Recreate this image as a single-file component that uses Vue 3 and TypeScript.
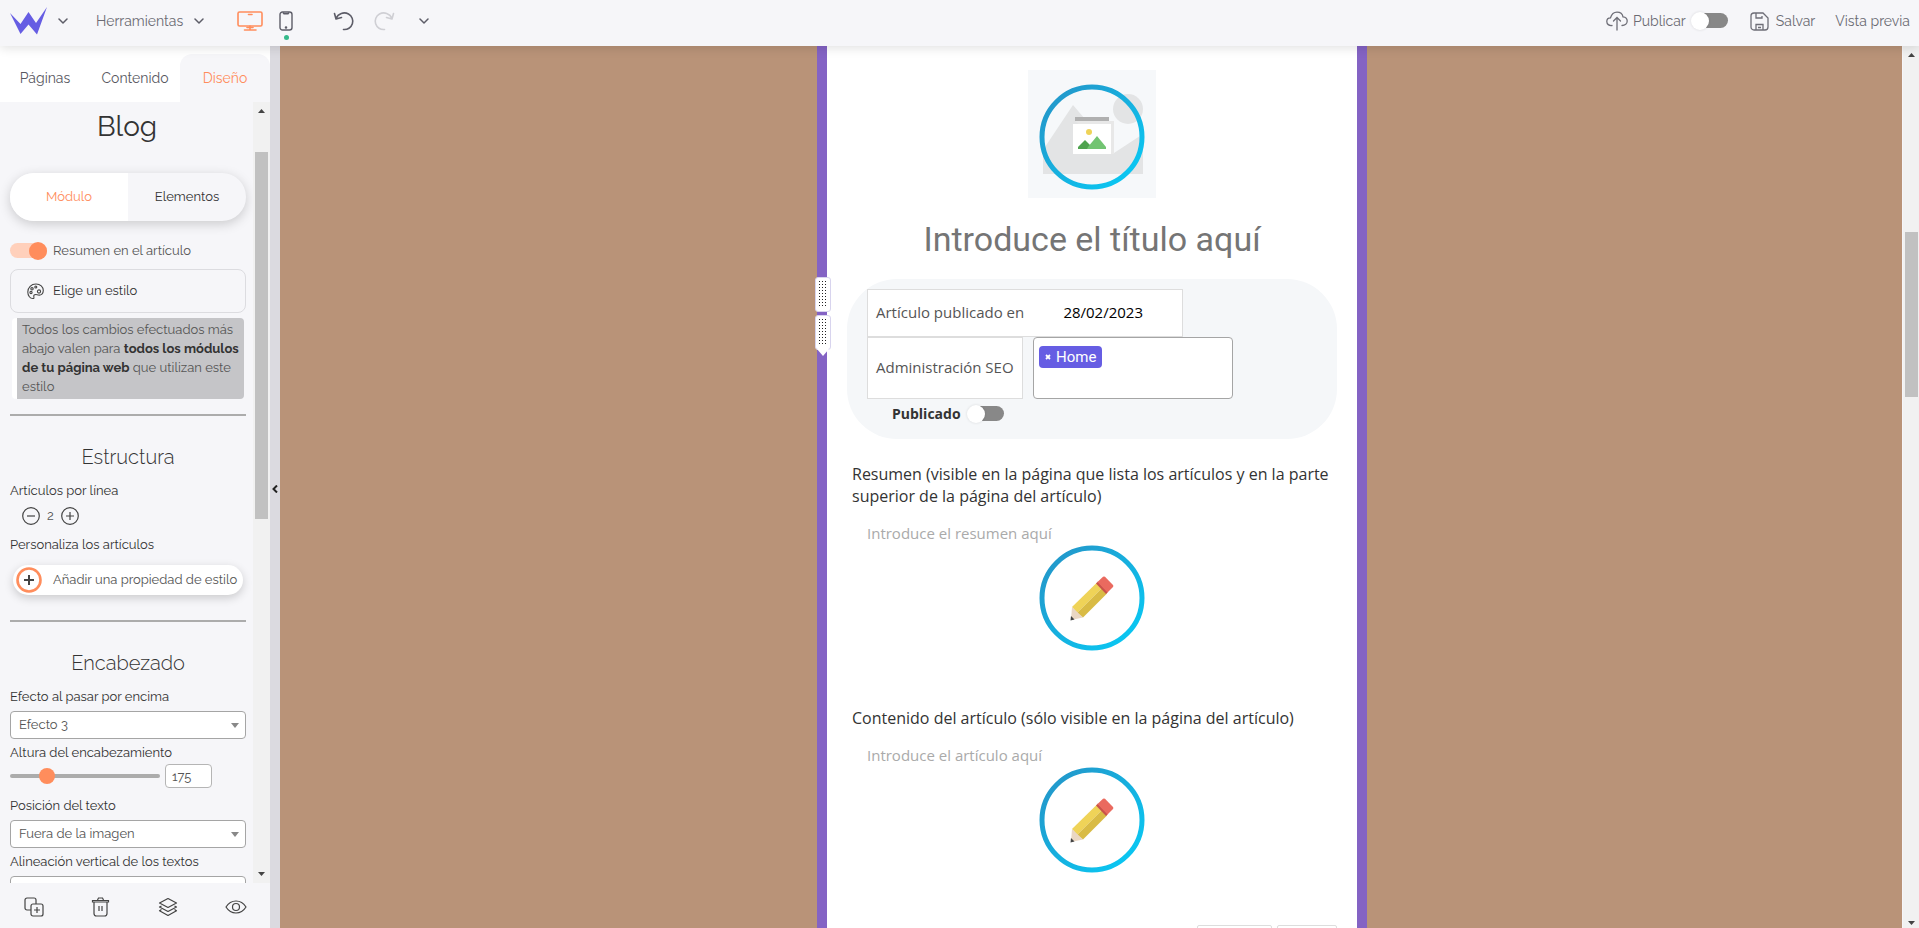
<script setup lang="ts">
import { ref } from 'vue'

const sideTabs = ['Páginas', 'Contenido', 'Diseño']
const activeTab = ref('Diseño')
const mode = ref<'modulo' | 'elementos'>('modulo')
const summary = ref(true)
const published = ref(false)
const publish = ref(false)
const perLine = ref(2)
const headerHeight = ref(175)
const effect = ref('Efecto 3')
const textPosition = ref('Fuera de la imagen')
const vertical = ref('')
const date = ref('28/02/2023')
const title = ref('')
const sections = ref([
  { id: 'resumen', label: 'Resumen (visible en la página que lista los artículos y en la parte superior de la página del artículo)', hint: 'Introduce el resumen aquí', text: '' },
  { id: 'articulo', label: 'Contenido del artículo (sólo visible en la página del artículo)', hint: 'Introduce el artículo aquí', text: '' }
])
</script>

<template>
  <div class="app">
    <svg class="defs" width="0" height="0" aria-hidden="true">
      <defs>
        <linearGradient id="ring" x1="0" y1="0" x2="1" y2="1">
          <stop offset="0.15" stop-color="#219bcd" />
          <stop offset="0.85" stop-color="#0bc4f0" />
        </linearGradient>
      </defs>
    </svg>

    <header class="topbar">
      <button class="logo" aria-label="Inicio">
        <svg width="38" height="28" viewBox="0 0 38 28"><path fill="#665de3" d="M1 6 11.500 17 19.500 5 27 16 38 0 28 27.500 19.500 17.500 11.500 27Z" /></svg>
        <svg class="chev" width="10" height="6" viewBox="0 0 10 6"><path d="M1 1 5 5 9 1" /></svg>
      </button>
      <button class="tools">
        <span>Herramientas</span>
        <svg class="chev" width="10" height="6" viewBox="0 0 10 6"><path d="M1 1 5 5 9 1" /></svg>
      </button>
      <div class="devices">
        <button aria-label="Escritorio">
          <svg width="26" height="20" viewBox="0 0 26 20" fill="none" stroke="#ff8d5c" stroke-width="1.600" stroke-linecap="round"><rect x="1" y="1" width="24" height="14" rx="1.500" /><path d="M11.500 3.500h3.500M13 15v3.500M10 16.500h6M7.500 19h11.500" /></svg>
        </button>
        <button class="mobile" aria-label="Móvil">
          <svg width="14" height="20" viewBox="0 0 14 20" fill="none" stroke="#5d5d68" stroke-width="1.400"><rect x="1" y="1" width="12" height="18" rx="2.500" /><path d="M4 1.500 5 2.800h4L10 1.500" /><circle cx="7" cy="16.500" r=".6" /></svg>
          <i></i>
        </button>
      </div>
      <div class="history">
        <button aria-label="Deshacer">
          <svg width="22" height="20" viewBox="0 0 22 20" fill="none" stroke="#5d5d68" stroke-width="1.600" stroke-linecap="round" stroke-linejoin="round"><path d="M3 7.500C5 2.500 11 .5 15.500 3a8.300 8.300 0 0 1-5 15.500M1.500 2.500 3 8l5.500-1.500" /></svg>
        </button>
        <button aria-label="Rehacer">
          <svg width="22" height="20" viewBox="0 0 22 20" fill="none" stroke="#cfcfd4" stroke-width="1.600" stroke-linecap="round" stroke-linejoin="round"><path d="M19 7.500C17 2.500 11 .5 6.500 3a8.300 8.300 0 0 0 5 15.500M20.500 2.500 19 8l-5.500-1.500" /></svg>
        </button>
        <button class="more" aria-label="Más">
          <svg class="chev" width="10" height="6" viewBox="0 0 10 6"><path d="M1 1 5 5 9 1" /></svg>
        </button>
      </div>
      <div class="actions">
        <label class="publish">
          <svg width="22" height="20" viewBox="0 0 22 20" fill="none" stroke="#6e6e77" stroke-width="1.300" stroke-linecap="round"><path d="M6 14.500C3 15 .8 13 .8 10.500.8 8.300 2.500 6.800 4.500 6.800 5.500 3.500 8 1.200 11 1.200s5.500 1.800 6 4.600c2.500.2 4.200 2 4.200 4.300 0 2.500-2.200 4.400-5.200 4.400M11 19V7M7.500 10 11 6.500l3.500 3.500" /></svg>
          <span>Publicar</span>
          <input v-model="publish" class="switch" type="checkbox" />
        </label>
        <button class="save">
          <svg width="19" height="19" viewBox="0 0 19 19" fill="none" stroke="#6e6e77" stroke-width="1.300"><path d="M4 1h9l5 5v9a3 3 0 0 1-3 3H4a3 3 0 0 1-3-3V4a3 3 0 0 1 3-3ZM6 1v5h6V4M6 18v-5.500h7V18M8 15.500h3" /></svg>
          <span>Salvar</span>
        </button>
        <button>Vista previa</button>
      </div>
    </header>

    <div class="body">
      <aside class="sidebar">
        <nav class="tabs">
          <button v-for="t in sideTabs" :key="t" :class="{ on: t === activeTab }" @click="activeTab = t">{{ t }}</button>
        </nav>
        <div class="panel">
          <div class="settings">
            <h1>Blog</h1>
            <div class="pill">
              <button :class="{ on: mode === 'modulo' }" @click="mode = 'modulo'">Módulo</button>
              <button :class="{ on: mode === 'elementos' }" @click="mode = 'elementos'">Elementos</button>
            </div>
            <label class="check"><input v-model="summary" class="switch warm" type="checkbox" /><span>Resumen en el artículo</span></label>
            <button class="style-pick">
              <svg width="17" height="17" viewBox="0 0 17 17" fill="none" stroke="#444" stroke-width="1.100"><path d="M6.500 15.500C3 16 .8 12.500.8 9 .8 4.500 4.200 1 9 1c4.300 0 7.300 2.800 7.300 6.500 0 3-2 5-5 4.500-2-.4-3.300-1-4.300.2-.9 1.100.8 2.900-.5 3.300Z" /><circle cx="4" cy="9.500" r="1.100" /><circle cx="5" cy="5.800" r="1.200" /><circle cx="8.800" cy="4" r="1" /><circle cx="12" cy="8.500" r="1.600" /></svg>
              <span>Elige un estilo</span>
            </button>
            <p class="note">Todos los cambios efectuados más abajo valen para <b>todos los módulos de tu página web</b> que utilizan este estilo</p>
            <hr />
            <h2>Estructura</h2>
            <p class="name">Artículos por línea</p>
            <div class="stepper">
              <button aria-label="Menos" @click="perLine--"><svg width="18" height="18" viewBox="0 0 18 18"><circle cx="9" cy="9" r="8.300" /><path d="M5 9h8" /></svg></button>
              <output>{{ perLine }}</output>
              <button aria-label="Más" @click="perLine++"><svg width="18" height="18" viewBox="0 0 18 18"><circle cx="9" cy="9" r="8.300" /><path d="M5 9h8M9 5v8" /></svg></button>
            </div>
            <p class="name">Personaliza los artículos</p>
            <button class="add">
              <svg width="26" height="26" viewBox="0 0 26 26" fill="none"><circle cx="13" cy="13" r="11.500" stroke="#ff8d5c" stroke-width="2.600" /><path d="M8 13h10M13 8v10" stroke="#444" stroke-width="2" /></svg>
              <span>Añadir una propiedad de estilo</span>
            </button>
            <hr class="second" />
            <h2>Encabezado</h2>
            <label class="name" for="effect">Efecto al pasar por encima</label>
            <div class="select">
              <select id="effect" v-model="effect"><option>Efecto 3</option></select>
              <svg width="8" height="5" viewBox="0 0 8 5"><path d="M0 0h8L4 5Z" fill="#888" /></svg>
            </div>
            <label class="name" for="height">Altura del encabezamiento</label>
            <div class="slider">
              <input id="height" v-model.number="headerHeight" type="range" min="0" max="800" />
              <input v-model.number="headerHeight" class="num" type="text" aria-label="Altura" />
            </div>
            <label class="name" for="position">Posición del texto</label>
            <div class="select">
              <select id="position" v-model="textPosition"><option>Fuera de la imagen</option></select>
              <svg width="8" height="5" viewBox="0 0 8 5"><path d="M0 0h8L4 5Z" fill="#888" /></svg>
            </div>
            <label class="name" for="vertical">Alineación vertical de los textos</label>
            <div class="select">
              <select id="vertical" v-model="vertical"><option value=""></option></select>
            </div>
          </div>
          <div class="scroll side">
            <svg width="7" height="4" viewBox="0 0 7 4"><path d="M3.500 0 7 4H0Z" /></svg>
            <div class="rail"><div class="thumb"></div></div>
            <svg width="7" height="4" viewBox="0 0 7 4"><path d="M0 0h7L3.500 4Z" /></svg>
          </div>
        </div>
        <footer class="bottom">
          <button aria-label="Duplicar"><svg width="20" height="20" viewBox="0 0 20 20"><path d="M7 13H3a2 2 0 0 1-2-2V3a2 2 0 0 1 2-2h7a2 2 0 0 1 2 2v4" /><rect x="7" y="7" width="12" height="12" rx="2" /><path d="M10 13h6M13 10v6" /></svg></button>
          <button aria-label="Eliminar"><svg width="20" height="20" viewBox="0 0 20 20"><path d="M3 5v11.500A2.500 2.500 0 0 0 5.500 19h8a2.500 2.500 0 0 0 2.500-2.500V5M1.500 3.500h16V5h-16ZM6.500 3l1-2h4l1 2M8 9v5M11 9v5" /></svg></button>
          <button aria-label="Capas"><svg width="20" height="20" viewBox="0 0 20 20" stroke-linejoin="round"><path d="M10 1.500 18.500 6 10 10.500 1.500 6ZM3.500 9 1.500 10l8.500 4.500L18.500 10l-2-1M3.500 12.500l-2 1.200L10 18.500l8.500-4.800-2-1.200" /></svg></button>
          <button aria-label="Ver"><svg width="22" height="14" viewBox="0 0 22 14"><path d="M1 7C3.500 3 7 1 11 1s7.500 2 10 6c-2.500 4-6 6-10 6S3.500 11 1 7Z" /><circle cx="11" cy="7" r="3.500" /></svg></button>
        </footer>
      </aside>

      <button class="divider" aria-label="Plegar panel">
        <svg width="6" height="8" viewBox="0 0 6 8" fill="none" stroke="#222" stroke-width="2"><path d="M5 .5 1.500 4 5 7.500" /></svg>
      </button>

      <main class="canvas">
        <article class="post">
          <div class="grips">
            <span class="grip"></span>
            <span class="grip low"></span>
          </div>
          <button class="picture" aria-label="Cambiar imagen">
            <svg width="128" height="128" viewBox="0 0 128 128">
              <rect width="128" height="128" fill="#f6f8fa" />
              <circle cx="100" cy="39" r="15" fill="#e3e4e5" />
              <path fill="#e3e4e5" d="M15 104V80L45 35 86 83 115 64v40Z" />
              <path fill="#b0b0b0" d="M47 47h34v4H47z" />
              <path fill="#e8e8e8" d="M47 51h39v33h-3z" />
              <path fill="#fff" d="M45 54h38v30H45z" />
              <circle cx="61" cy="62" r="3" fill="#efd358" />
              <path fill="#4fa34f" d="M50 79v-2l7-7 6 6v3z" />
              <path fill="#72c472" d="M59 79l1-2 9-11 9 11v2z" />
              <circle cx="64" cy="67" r="50" fill="none" stroke="url(#ring)" stroke-width="5" />
            </svg>
          </button>
          <input v-model="title" class="title" type="text" placeholder="Introduce el título aquí" aria-label="Título" />
          <div class="meta">
            <div class="row">
              <label class="dated"><span>Artículo publicado en</span><input v-model="date" type="text" /></label>
            </div>
            <div class="row seo">
              <span class="cell">Administración SEO</span>
              <div class="tags"><span class="tag"><button aria-label="Quitar Home"><svg width="6" height="6" viewBox="0 0 6 6"><path d="M1 1 5 5M5 1 1 5" stroke="#fff" stroke-width="1.800" /></svg></button>Home</span></div>
            </div>
            <label class="state"><b>Publicado</b><input v-model="published" class="switch" type="checkbox" /></label>
          </div>
          <section v-for="s in sections" :key="s.id" class="block">
            <label :for="s.id">{{ s.label }}</label>
            <textarea :id="s.id" v-model="s.text" rows="1" :placeholder="s.hint"></textarea>
            <button class="edit" aria-label="Editar">
              <svg width="106" height="106" viewBox="0 0 106 106">
                <circle cx="53" cy="53" r="50" fill="#fff" stroke="url(#ring)" stroke-width="5" />
                <path fill="#efd358" d="M33 62 58 37.500 63 43 38 68Z" />
                <path fill="#d9bb45" d="M38 68 63 43 68 48.500 44 72.500Z" />
                <path fill="#ead7c3" d="M33 62 44 72.500 32 75Z" />
                <path fill="#444" d="M32 71 35.500 74.500 31.500 75.500Z" />
                <path fill="#c9524b" d="M57 38.500 59 36.500 69 47 67 49Z" />
                <path fill="#ea6a5f" d="M58.500 37 64 31.800q1-.8 2 0l8 8.200q.8 1 0 2L68.500 47.500Z" />
              </svg>
            </button>
          </section>
          <div class="ends"><button aria-label="Cancelar"></button><button aria-label="Aceptar"></button></div>
        </article>
      </main>
      <div class="scroll page">
        <svg width="7" height="4" viewBox="0 0 7 4"><path d="M3.500 0 7 4H0Z" /></svg>
        <div class="rail"><div class="thumb"></div></div>
        <svg width="7" height="4" viewBox="0 0 7 4"><path d="M0 0h7L3.500 4Z" /></svg>
      </div>
    </div>
  </div>
</template>

<style>
body { margin: 0; overflow: hidden; }
</style>

<style scoped>
* { box-sizing: border-box; }
.app { height: 100vh; display: flex; flex-direction: column; overflow: hidden; background: #f6f6f9; font: 13px/20px Raleway, Lato, sans-serif; color: #333; }
.defs { position: absolute; }
button { padding: 0; border: 0; background: none; font: inherit; color: inherit; cursor: pointer; }
input, textarea, select { font: inherit; margin: 0; outline: none; }
svg { display: block; flex: none; }
h1, h2, p { margin: 0; }

.topbar { position: relative; z-index: 2; flex: none; height: 46px; display: flex; align-items: center; padding: 0 9px; background: #f6f6f9; box-shadow: 0 2px 10px rgba(0, 0, 0, .12); font-size: 14px; font-weight: 400; color: #6b6b73; padding-bottom: 4px; }
.chev { fill: none; stroke: #5d5d68; stroke-width: 1.500px; stroke-linecap: round; stroke-linejoin: round; }
.logo, .tools { display: flex; align-items: center; gap: 11px; }
.tools { margin-left: 28px; }
.devices { display: flex; align-items: center; gap: 16px; margin-left: 33px; }
.mobile { position: relative; }
.mobile i { position: absolute; left: 5px; top: 24px; width: 5px; height: 5px; border-radius: 50%; background: #35b98a; }
.history { display: flex; align-items: center; gap: 18px; margin-left: 40px; }
.more { margin-left: 6px; }
.actions { display: flex; align-items: center; margin-left: auto; }
.publish { display: flex; align-items: center; gap: 5px; }
.save { display: flex; align-items: center; gap: 7px; margin: 0 20px 0 22px; }

.switch { appearance: none; position: relative; flex: none; width: 37px; height: 18px; cursor: pointer; }
.switch::before { content: ""; position: absolute; inset: 1px 0 2px 1px; border-radius: 8px; background: #888; }
.switch::after { content: ""; position: absolute; left: 0; top: 0; width: 18px; height: 18px; border-radius: 50%; background: #fff; box-shadow: 0 0 3px rgba(0, 0, 0, .12); }
.switch.warm:checked::before { background: #ffd0bb; inset: 1px 0 2px 0; }
.switch.warm:checked::after { left: 19px; background: #ff8d5c; box-shadow: none; }

.body { flex: 1; min-height: 0; display: flex; }
.sidebar { flex: none; width: 270px; display: flex; flex-direction: column; }
.tabs { flex: none; display: flex; height: 56px; padding-top: 8px; background: #fff; font-size: 14px; color: #58585f; }
.tabs button { flex: 1; }
.tabs .on { background: #f6f6f9; color: #ff8d5c; border-radius: 12px 12px 0 0; }
.panel { flex: 1; min-height: 0; display: flex; }
.settings { flex: 1; min-width: 0; overflow: hidden; padding: 7px 7px 0 10px; }
h1 { font-size: 28px; line-height: 36px; font-weight: 400; text-align: center; padding-right: 2px; }
.pill { display: flex; height: 48px; margin-top: 28px; border-radius: 24px; overflow: hidden; box-shadow: 0 3px 12px rgba(0, 0, 0, .18); }
.pill button { flex: 1; }
.pill .on { background: #fff; color: #ff8d5c; }
.check { display: flex; align-items: center; gap: 6px; height: 20px; margin-top: 20px; color: #555; }
.style-pick { display: flex; align-items: center; gap: 9px; width: 100%; height: 44px; margin-top: 8px; padding: 0 16px; border: 1px solid #dcdce0; border-radius: 8px; }
.note { margin: 5px 2px 0; padding: 2px 4px 3px 5px; border-left: 5px solid #fff; border-radius: 4px; background: #c5c5c8; line-height: 19px; color: #555; }
.note b { font-weight: 700; color: #333; }
hr { height: 2px; margin: 15px 0 0; border: 0; background: #acacac; }
hr.second { margin-top: 25px; }
h2 { margin: 26px 0 9px; font-size: 20px; line-height: 30px; font-weight: 300; text-align: center; }
.name { display: block; }
.stepper { display: flex; align-items: center; gap: 7px; height: 18px; margin: 6px 12px 10px; color: #555; }
.stepper svg { fill: none; stroke: #444; stroke-width: 1.200px; }
.add { display: flex; align-items: center; gap: 11px; height: 30px; width: 230px; margin: 10px 3px 0; padding: 0 3px; border-radius: 15px; background: #fff; box-shadow: 0 3px 10px rgba(0, 0, 0, .18); white-space: nowrap; color: #555; }
.select { position: relative; margin: 4px 0; }
.select select { display: block; appearance: none; width: 100%; height: 28px; padding: 0 8px; border: 1px solid #a5a5a5; border-radius: 4px; background: #fff; color: #555; }
.select svg { position: absolute; right: 7px; top: 12px; }
.slider { display: flex; align-items: center; gap: 5px; height: 24px; margin: 1px 0 8px; }
.slider [type="range"] { appearance: none; width: 150px; height: 16px; background: none; }
.slider [type="range"]::-webkit-slider-runnable-track { height: 4px; border-radius: 2px; background: #acacac; }
.slider [type="range"]::-webkit-slider-thumb { appearance: none; width: 16px; height: 16px; margin-top: -6px; border-radius: 50%; background: #ff8d5c; }
.num { width: 47px; height: 24px; padding: 0 6px; border: 1px solid #b5b5b5; border-radius: 4px; background: #fff; color: #555; }
.bottom { flex: none; height: 45px; display: flex; align-items: center; justify-content: space-between; padding: 3px 23px 0 24px; }
.bottom svg { fill: none; stroke: #444; stroke-width: 1.200px; }

.scroll { flex: none; display: flex; flex-direction: column; align-items: center; width: 17px; padding: 7px 0; background: #f1f1f1; }
.scroll svg { fill: #444; }
.rail { flex: 1; display: flex; flex-direction: column; width: 13px; }
.thumb { background: #c1c1c1; }
.side .rail { padding-top: 39px; }
.side .thumb { height: 51%; }
.page .rail { padding-top: 175px; }
.page .thumb { height: 24%; }
.page { width: 16px; margin-left: 1px; padding-bottom: 3px; }

.divider { flex: none; width: 10px; padding-top: 4px; display: flex; align-items: center; justify-content: center; background: #dbdae0; }
.canvas { flex: 1; min-width: 0; display: flex; justify-content: center; padding-left: 2px; overflow: hidden; background: #b99378; }
.post { position: relative; align-self: flex-start; width: 550px; flex: none; display: flex; flex-direction: column; align-items: center; padding: 24px 10px 0; border: solid #8463c4; border-width: 0 10px; background: #fff; font-family: "Open Sans", sans-serif; font-size: 15px; line-height: 22px; }
.grips { position: absolute; left: -12px; top: 231px; display: flex; flex-direction: column; gap: 3px; }
.grip { position: relative; width: 16px; height: 35px; border: 1px solid #d8d4ee; border-radius: 3px; background: #fff; }
.grip::before { content: ""; position: absolute; left: 3px; top: 3px; width: 9px; height: 27px; background: conic-gradient(from 270deg at 1px 1px, #222 90deg, transparent 0) 0 0 / 3px 3px; }
.grip.low::after { content: ""; position: absolute; left: 1px; top: 33px; border: solid transparent; border-width: 7px 6px 0; border-top-color: #fff; }
.title { width: 100%; height: 40px; margin: 21px 0 20px; padding: 0; border: 0; background: none; font: 34px/40px Roboto, sans-serif; text-align: center; color: #757575; }
.title::placeholder { color: #757575; }
.meta { width: 490px; padding: 10px 20px; border-radius: 50px; background: #f5f7f9; color: #555; }
.row { display: flex; }
.dated { display: flex; align-items: center; height: 48px; width: 316px; padding: 0 8px 2px; border: 1px solid #ddd; background: #fff; }
.dated input { flex: 1; min-width: 0; border: 0; padding: 0 31px 0 0; text-align: right; background: none; color: #000; }
.seo { gap: 10px; height: 62px; }
.cell { display: flex; align-items: center; width: 156px; padding: 0 8px 2px; border: 1px solid #ddd; background: #fff; white-space: nowrap; }
.tags { display: flex; align-items: flex-start; width: 200px; padding: 8px 5px; border: 1px solid #a5a5a5; border-radius: 4px; background: #fff; }
.tag { display: flex; align-items: center; gap: 5px; height: 22px; padding: 0 6px; border-radius: 4px; background: #665de3; color: #fff; font-family: Roboto, sans-serif; }
.state { display: flex; align-items: center; gap: 6px; height: 30px; padding-left: 25px; font-size: 14px; color: #333; }
.block { width: 100%; display: flex; flex-direction: column; align-items: center; padding: 24px 0 32px; }
.block label { width: 100%; padding: 0 15px; font-size: 16px; }
.block textarea { width: 450px; height: 22px; margin: 15px 0 1px; padding: 0; border: 0; resize: none; overflow: hidden; background: none; line-height: 22px; }
.block textarea::placeholder { color: #aaa; }
.ends { align-self: flex-end; display: flex; gap: 5px; margin: 20px 10px 0; }
.ends button { width: 60px; height: 34px; border: 1px solid #ddd; border-radius: 2px; background: #fff; }
.ends button:first-child { width: 75px; }
</style>
